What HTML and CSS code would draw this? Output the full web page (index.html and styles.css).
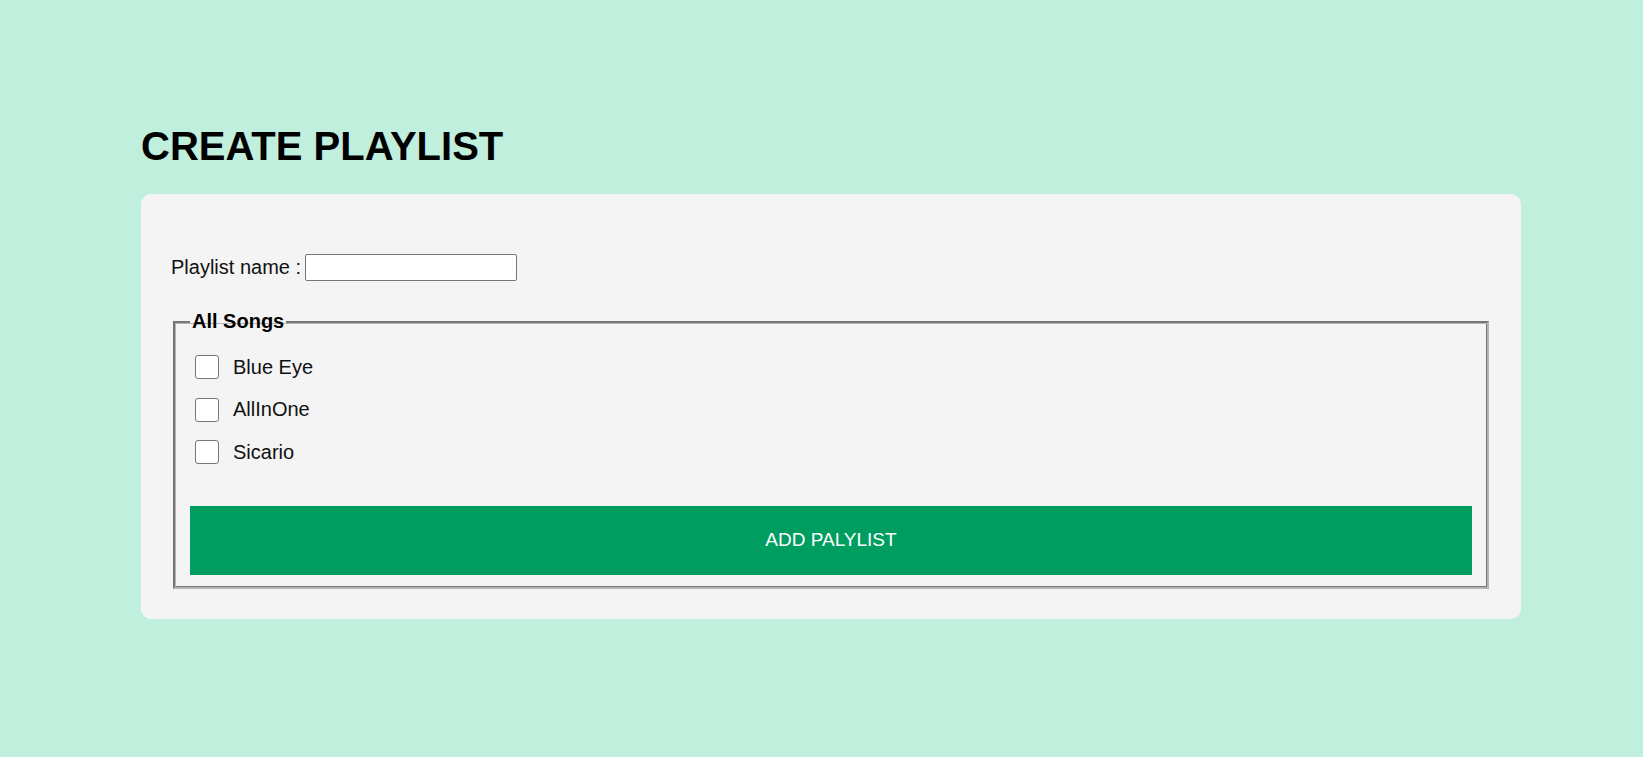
FILE: index.html
```html
<!DOCTYPE html>
<html lang="en">
<head>
<meta charset="utf-8">
<title>Create Playlist</title>
<link rel="stylesheet" href="styles.css">
</head>
<body>
<main class="page">
  <h1 class="title">CREATE PLAYLIST</h1>
  <form class="card">
    <div class="name-row">
      <label class="name-label" for="pname">Playlist name :</label>
      <input class="name-input" id="pname" type="text">
    </div>
    <fieldset class="songs">
      <legend class="songs-legend">All Songs</legend>
      <div class="song-list">
        <label class="song"><input class="song-check" type="checkbox"><span>Blue Eye</span></label>
        <label class="song"><input class="song-check" type="checkbox"><span>AllInOne</span></label>
        <label class="song"><input class="song-check" type="checkbox"><span>Sicario</span></label>
      </div>
      <button class="add-btn" type="button">ADD PALYLIST</button>
    </fieldset>
  </form>
</main>
</body>
</html>
```
FILE: styles.css
```css
html, body {
  margin: 0;
  padding: 0;
  background: #c0efdd;
  height: 100%;
}
body {
  font-family: Arial, "Liberation Sans", sans-serif;
  color: #000;
}
.page {
  padding: 124px 0 0 141px;
  width: 1380px;
}
.title {
  margin: 0 0 25px;
  font-size: 40px;
  font-weight: bold;
  line-height: 45px;
}
.card {
  background: #f4f4f4;
  border-radius: 10px;
  padding: 60px 30px 30px;
  display: flex;
  flex-direction: column;
}
.name-row {
  display: flex;
  align-items: center;
  height: 27px;
  font-size: 20px;
}
.name-label {
  color: #111;
}
.name-input {
  box-sizing: border-box;
  width: 212px;
  height: 27px;
  margin: 0 0 0 4px;
  border: 1px solid #767676;
  border-radius: 2px;
  background: #fff;
  font-size: 16px;
  padding: 1px 2px;
}
.songs {
  margin: 29px 2px 0;
  padding: 0 15px 12px;
  border-width: 2px;
  border-style: solid;
  border-color: #767676 #b4b4b4 #b4b4b4 #767676;
  box-shadow: inset 1px 1px 0 #b4b4b4, inset -1px -1px 0 #767676;
  font-size: 20px;
}
.songs-legend {
  font-weight: bold;
  font-size: 20px;
  padding: 0 2px;
  line-height: 23px;
}
.song-list {
  display: flex;
  flex-direction: column;
  padding-top: 13px;
}
.song {
  display: flex;
  align-items: center;
  height: 42.5px;
  gap: 14px;
  color: #111;
}
.song-check {
  appearance: none;
  -webkit-appearance: none;
  box-sizing: border-box;
  width: 24px;
  height: 24px;
  margin: 0 0 0 5px;
  border: 1px solid #767676;
  border-radius: 3px;
  background: #fff;
}
.add-btn {
  margin-top: 32px;
  height: 69px;
  width: 100%;
  border: none;
  background: #009d60;
  color: #fff;
  font-family: Arial, "Liberation Sans", sans-serif;
  font-size: 19px;
}
```
